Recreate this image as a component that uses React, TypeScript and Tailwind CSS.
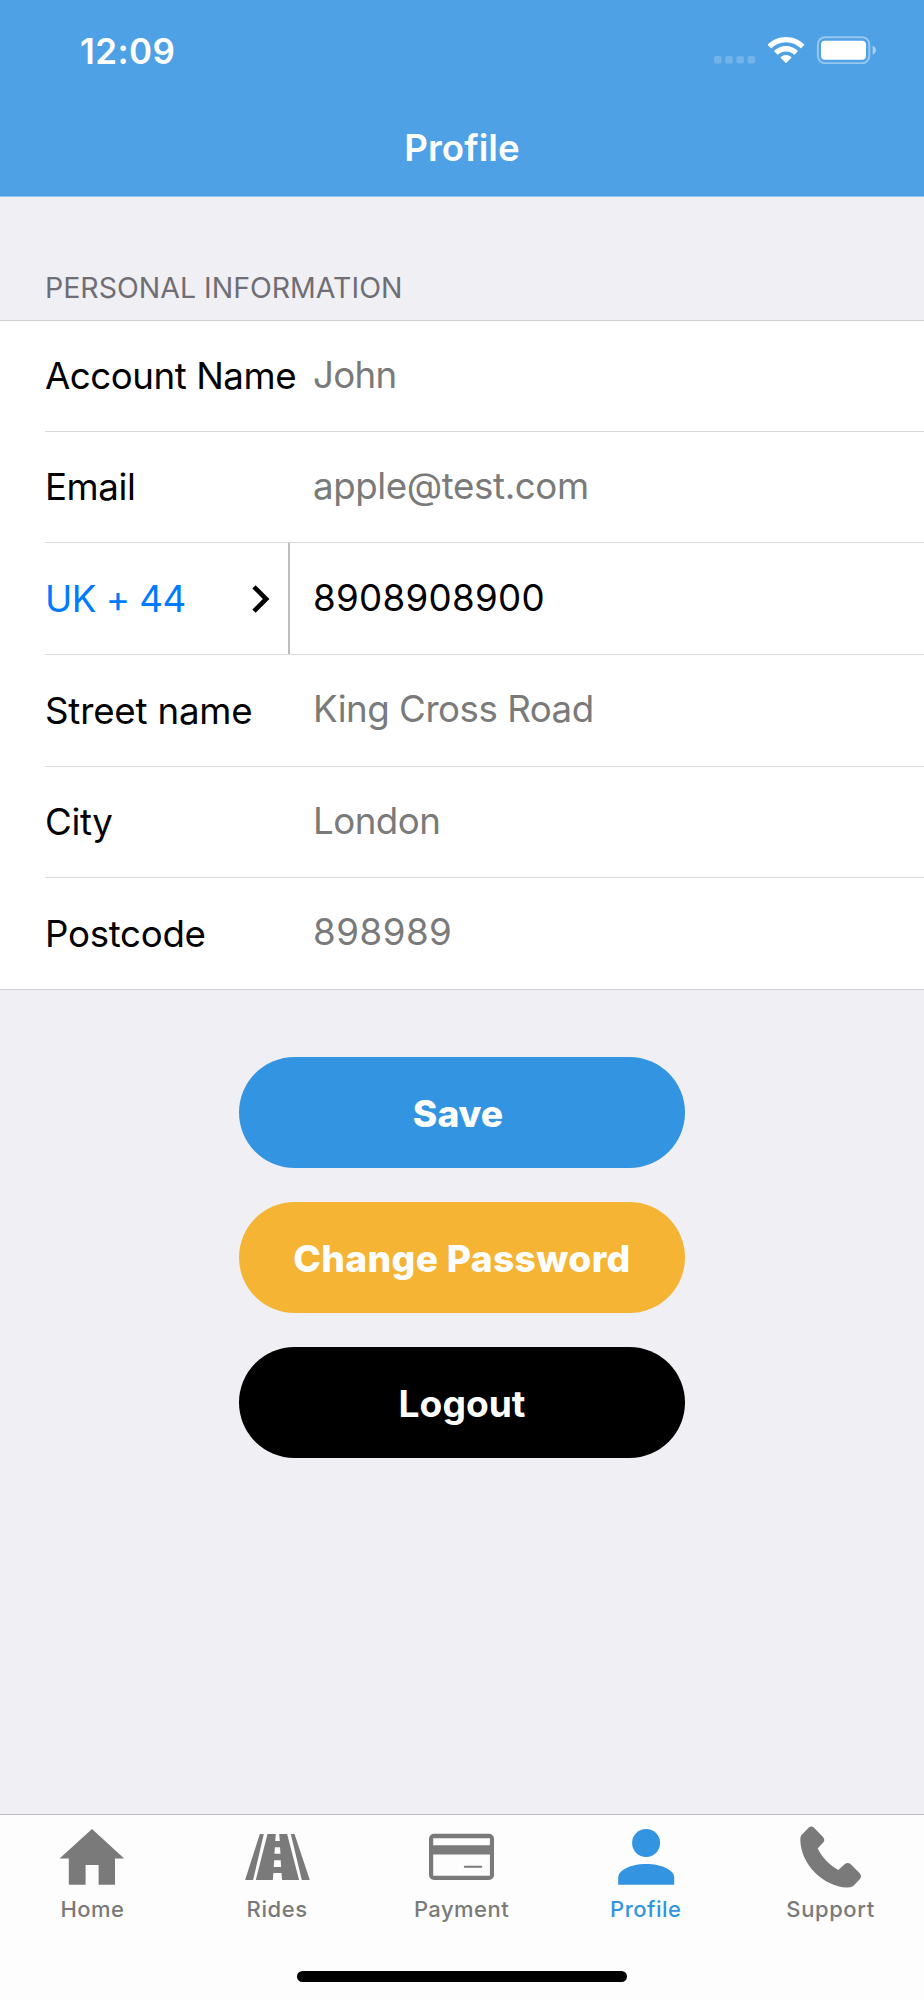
import type { ReactNode } from 'react';
import { clsx } from 'clsx';

type Field = { label: string; value: string; labelClass: string; valueClass: string };

const topFields: Field[] = [
  { label: 'Account Name', value: 'John', labelClass: 'tracking-[-0.47px]', valueClass: 'tracking-[-0.7px]' },
  { label: 'Email', value: 'apple@test.com', labelClass: 'tracking-[-0.45px]', valueClass: 'tracking-[-0.4px]' },
];

const addressFields: Field[] = [
  { label: 'Street name', value: 'King Cross Road', labelClass: 'tracking-[-0.2px]', valueClass: 'tracking-[-0.5px]' },
  { label: 'City', value: 'London', labelClass: 'tracking-[-0.4px]', valueClass: 'tracking-[-0.55px]' },
  { label: 'Postcode', value: '898989', labelClass: 'tracking-[-0.3px]', valueClass: 'tracking-[0.5px]' },
];

const StatusIcons = () => (
  <svg className="mb-px h-7 w-[164px]" viewBox="714 36 164 28" fill="white">
    <g opacity="0.2">
      <rect x="714" y="56" width="7.6" height="7.6" rx="2" />
      <rect x="725.2" y="56" width="7.6" height="7.6" rx="2" />
      <rect x="736.4" y="56" width="7.6" height="7.6" rx="2" />
      <rect x="747.6" y="56" width="7.6" height="7.6" rx="2" />
    </g>
    <path d="M786 37C779 37 772.5 39.8 768 44.3Q767.6 44.8 768 45.3L770.7 48Q771.2 48.4 771.7 48C775.5 44.4 780.5 42.3 786 42.3S796.5 44.4 800.3 48Q800.8 48.4 801.3 48L804 45.3Q804.4 44.8 804 44.3C799.5 39.8 793 37 786 37Z" />
    <path d="M786 46C781.6 46 777.5 47.7 774.4 50.6Q773.9 51.1 774.4 51.6L777.2 54.4Q777.7 54.9 778.2 54.4C780.3 52.5 783 51.4 786 51.4S791.7 52.5 793.8 54.4Q794.3 54.9 794.8 54.4L797.6 51.6Q798.1 51.1 797.6 50.6C794.5 47.7 790.4 46 786 46Z" />
    <path d="M786 55C784 55 782.2 55.8 780.8 57Q780.3 57.5 780.8 58L785.5 62.8Q786 63.3 786.5 62.8L791.2 58Q791.7 57.5 791.2 57C789.8 55.8 788 55 786 55Z" />
    <rect x="817.9" y="37.2" width="51.4" height="26" rx="7.2" fill="none" stroke="white" strokeOpacity="0.4" strokeWidth="2" />
    <rect x="821" y="40.8" width="45" height="19" rx="4" />
    <path d="M872.6 45.8C874.6 46.6 875.9 48.3 875.9 50.3S874.6 54 872.6 54.8Z" opacity="0.5" />
  </svg>
);

const Row = ({ label, value, labelClass, valueClass }: Field) => (
  <div className="flex items-center border-b border-[#dadada] last:border-b-0">
    <span className={clsx('w-[268px] shrink-0 whitespace-nowrap pt-[1px] text-black', labelClass)}>{label}</span>
    <span className={clsx('whitespace-nowrap pb-[2px] text-[#7a7a7a]', valueClass)}>{value}</span>
  </div>
);

const Tab = ({ label, active, className, children }: { label: string; active?: boolean; className: string; children: ReactNode }) => (
  <button className={clsx('flex flex-1 flex-col items-center', active ? 'text-[#3394e2]' : 'text-[#7a7a7a]')}>
    <svg className="h-[72px] w-[72px]" viewBox="0 0 72 72" fill="currentColor">
      {children}
    </svg>
    <span className={clsx('mt-px text-[22px] leading-7 font-medium', className)}>{label}</span>
  </button>
);

export default function App() {
  return (
    <div className="flex h-[2000px] w-[924px] flex-col overflow-hidden bg-[#efeff4] font-['Inter',sans-serif]">
      <header className="h-[197px] shrink-0 border-b border-[#93c5ef] bg-[#4fa1e5] text-white">
        <div className="flex h-[101px] items-center justify-between pr-[46px] pl-[80px]">
          <span className="pt-[1px] text-[35px] leading-none font-semibold tracking-[0.4px]">12:09</span>
          <StatusIcons />
        </div>
        <h1 className="flex h-[95px] items-center justify-center pb-[2px] text-[36.7px] font-semibold tracking-[0.05px]">
          Profile
        </h1>
      </header>

      <main className="flex-1">
        <h2 className="flex h-[123px] items-end pb-[17px] pl-[45px] text-[28.5px] leading-[30px] text-[#6f6e74]">
          PERSONAL INFORMATION
        </h2>

        <section className="grid h-[670px] grid-rows-[111px_111px_112px_112px_111px_111px] border-y border-[#d0d0d4] bg-white pl-[45px] text-[36.7px] leading-none">
          {topFields.map((field) => (
            <Row key={field.label} {...field} />
          ))}
          <div className="flex items-center border-b border-[#dadada]">
            <button className="flex h-full w-[245px] items-center justify-between border-r-2 border-[#bdbdbd] pr-[18px]">
              <span className="pt-[2px] tracking-[-0.5px] text-[#007aff]">UK + 44</span>
              <svg className="h-7 w-[19px]" viewBox="0 0 19 28" fill="none" stroke="black" strokeWidth="4.6">
                <path d="M3 1.8L15.2 14L3 26.2" />
              </svg>
            </button>
            <span className="pb-[1px] pl-[23px] tracking-[0.3px] text-black">8908908900</span>
          </div>
          {addressFields.map((field) => (
            <Row key={field.label} {...field} />
          ))}
        </section>

        <div className="flex flex-col items-center gap-[33.5px] pt-[66.5px] text-[37.2px] leading-none text-white">
          <button className="h-[111.5px] w-[446px] rounded-full bg-[#3394e2] pt-[2px] pr-2 font-extrabold">Save</button>
          <button className="h-[111.5px] w-[446px] rounded-full bg-[#f5b434] pt-[2px] font-extrabold tracking-[0.35px]">
            Change Password
          </button>
          <button className="h-[111.5px] w-[446px] rounded-full bg-black pt-[2px] font-bold">Logout</button>
        </div>
      </main>

      <footer className="flex h-[186px] shrink-0 flex-col items-center justify-between border-t border-[#bdbdbf] bg-[#fdfdfd] pt-[7px] pb-[18px]">
        <nav className="flex w-full">
          <Tab label="Home" className="tracking-[0.4px]">
            <path d="M36 7L68.2 36.6H59V62.8H42.6V43H29.6V62.8H12.8V36.6H3.6Z" />
          </Tab>
          <Tab label="Rides" className="tracking-[0.6px]">
            <path d="M18.8 12H22.8L12.1 58H4.1Z" />
            <path d="M49.8 12H53.5L68.8 58H60.8Z" />
            <path
              fillRule="evenodd"
              d="M26.5 12H34.8L34.2 19H38.8L38.2 12H46.1L58.1 58H41.1L40.5 51H32.4L31.8 58H14.8ZM33.9 25.3L33.4 31.7H39.5L39 25.3ZM33.2 38.2L32.7 45H40.2L39.7 38.2Z"
            />
          </Tab>
          <Tab label="Payment" className="pr-px tracking-[0.45px]">
            <path
              fillRule="evenodd"
              d="M8 11.8H63A5 5 0 0 1 68 16.8V53A5 5 0 0 1 63 58H8A5 5 0 0 1 3 53V16.8A5 5 0 0 1 8 11.8ZM7.2 16.2V23.3H63.9V16.2ZM7.2 32.6V53.8H63.9V32.6Z"
            />
            <rect x="37.8" y="43.8" width="18.4" height="1.9" rx="0.9" />
          </Tab>
          <Tab label="Profile" className="pr-[2px] tracking-[0.5px]" active>
            <circle cx="35.1" cy="21" r="14" />
            <path d="M7.2 62.8V55.5C7.2 48 20 41.9 35.2 41.9S63.2 48 63.2 55.5V62.8Z" />
          </Tab>
          <Tab label="Support" className="pr-[2px] tracking-[0.6px]">
            <path d="M12.8 5.5Q15.2 3.7 17.8 5.5L27 14.9Q29.2 17.6 27.6 20L21.7 26.6C26 35.5 34 43.7 42.3 48L49.2 41.8Q51.8 40.3 54.5 42L64 51.5Q66 54 64.4 56.6L57.3 64Q54.8 65.6 51 65.6C27 64.5 4.5 42 4.3 17.5Q4.2 15 5.3 13.3Z" />
          </Tab>
        </nav>
        <div className="h-[11px] w-[330px] rounded-full bg-black" />
      </footer>
    </div>
  );
}
